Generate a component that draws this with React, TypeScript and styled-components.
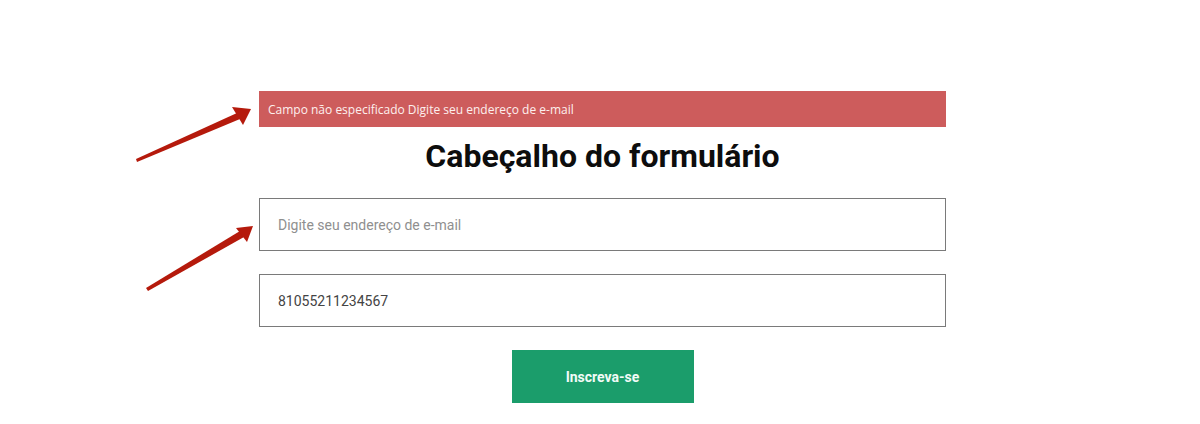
import React from 'react';
import styled, { createGlobalStyle } from 'styled-components';

const GlobalStyle = createGlobalStyle`
  html, body {
    margin: 0;
    padding: 0;
    background: #ffffff;
  }
  body {
    font-family: Roboto, 'Liberation Sans', sans-serif;
  }
`;

const Page = styled.div`
  position: relative;
  width: 1200px;
  height: 424px;
  padding-top: 91px;
  box-sizing: border-box;
  overflow: hidden;
`;

const Form = styled.form`
  width: 687px;
  margin-left: 259px;
  display: flex;
  flex-direction: column;
  align-items: center;
`;

const ErrorBar = styled.div`
  align-self: stretch;
  height: 36px;
  box-sizing: border-box;
  padding-left: 9px;
  display: flex;
  align-items: center;
  background-color: #cd5c5c;
  color: #fdf0ee;
  font-family: 'Open Sans', sans-serif;
  font-size: 12px;
`;

const Title = styled.h1`
  margin: 12px 0 0;
  height: 37px;
  line-height: 34px;
  font-family: Roboto, sans-serif;
  font-weight: 700;
  font-size: 32px;
  color: #0d0d0d;
`;

const Field = styled.input`
  align-self: stretch;
  height: 53px;
  box-sizing: border-box;
  margin-top: ${(p: { $gap: number }) => p.$gap}px;
  padding: 0 18px;
  border: 1px solid #7a7a7a;
  border-radius: 0;
  outline: none;
  font-family: Roboto, sans-serif;
  font-size: 14px;
  color: #444;
  &::placeholder {
    color: #8f8f8f;
  }
`;

const Submit = styled.button`
  margin-top: 23px;
  width: 182px;
  height: 53px;
  border: none;
  background-color: #1b9d6b;
  color: #f2fbf7;
  font-family: Roboto, sans-serif;
  font-weight: 700;
  font-size: 14px;
  cursor: pointer;
`;

const Overlay = styled.svg`
  position: absolute;
  left: 0;
  top: 0;
  pointer-events: none;
`;

const arrowColor = '#b51a0c';

function Arrows() {
  return (
    <Overlay width={1200} height={424} viewBox="0 0 1200 424">
      <polygon points="136,159 137,162 240,119 237,113" fill={arrowColor} />
      <polygon points="232,107 251,109 243,125" fill={arrowColor} />
      <polygon points="146,288 148,291 244,237 240,231" fill={arrowColor} />
      <polygon points="236,228 253,226 247,242" fill={arrowColor} />
    </Overlay>
  );
}

export default function App() {
  return (
    <Page>
      <GlobalStyle />
      <Form onSubmit={(e) => e.preventDefault()}>
        <ErrorBar>Campo não especificado Digite seu endereço de e-mail</ErrorBar>
        <Title>Cabeçalho do formulário</Title>
        <Field $gap={22} type="email" placeholder="Digite seu endereço de e-mail" />
        <Field $gap={23} type="text" defaultValue="81055211234567" />
        <Submit type="submit">Inscreva-se</Submit>
      </Form>
      <Arrows />
    </Page>
  );
}
